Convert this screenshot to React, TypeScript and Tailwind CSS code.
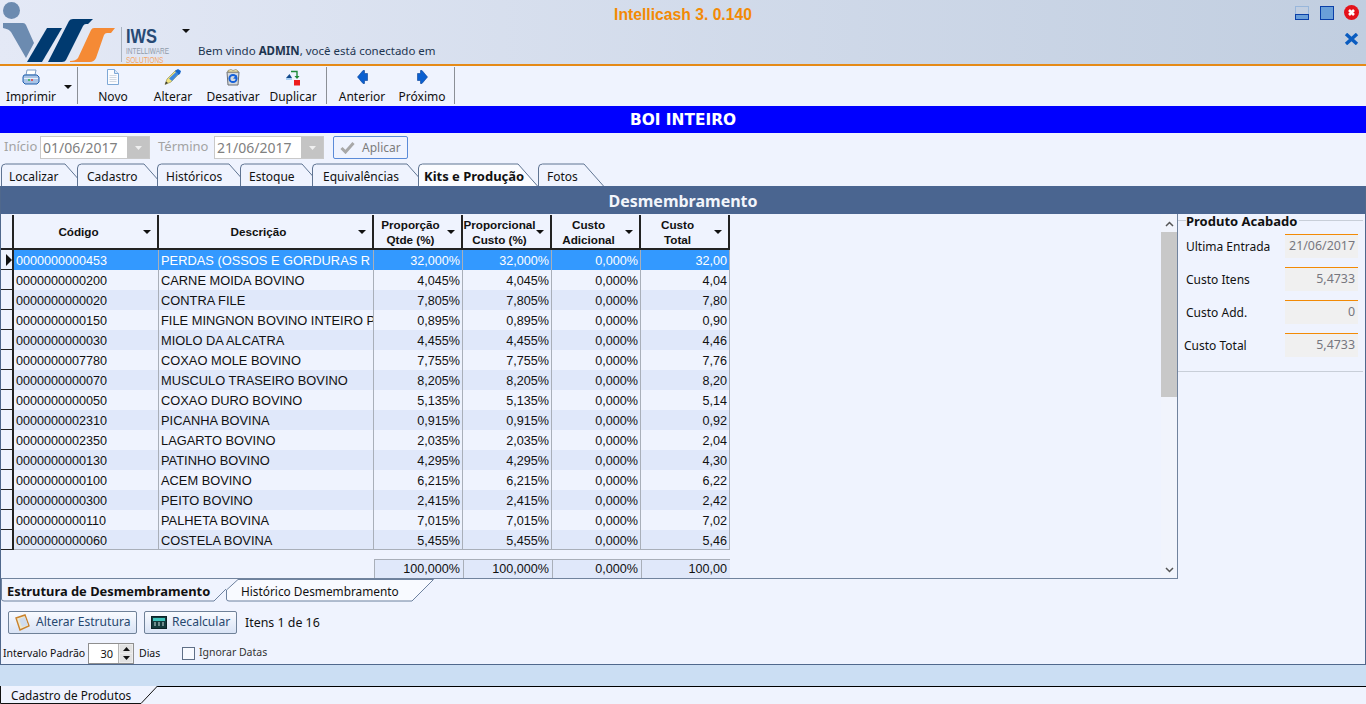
import React from 'react';

const UI = { fontFamily: '"Noto Sans", Tahoma, sans-serif' };
const ARIAL = { fontFamily: '"Liberation Sans", Arial, sans-serif' };

const ROWS = [
  ['0000000000453', 'PERDAS (OSSOS E GORDURAS R', '32,000%', '32,000%', '0,000%', '32,00'],
  ['0000000000200', 'CARNE MOIDA BOVINO', '4,045%', '4,045%', '0,000%', '4,04'],
  ['0000000000020', 'CONTRA FILE', '7,805%', '7,805%', '0,000%', '7,80'],
  ['0000000000150', 'FILE MINGNON BOVINO INTEIRO P', '0,895%', '0,895%', '0,000%', '0,90'],
  ['0000000000030', 'MIOLO DA ALCATRA', '4,455%', '4,455%', '0,000%', '4,46'],
  ['0000000007780', 'COXAO MOLE BOVINO', '7,755%', '7,755%', '0,000%', '7,76'],
  ['0000000000070', 'MUSCULO TRASEIRO BOVINO', '8,205%', '8,205%', '0,000%', '8,20'],
  ['0000000000050', 'COXAO DURO BOVINO', '5,135%', '5,135%', '0,000%', '5,14'],
  ['0000000002310', 'PICANHA BOVINA', '0,915%', '0,915%', '0,000%', '0,92'],
  ['0000000002350', 'LAGARTO BOVINO', '2,035%', '2,035%', '0,000%', '2,04'],
  ['0000000000130', 'PATINHO BOVINO', '4,295%', '4,295%', '0,000%', '4,30'],
  ['0000000000100', 'ACEM BOVINO', '6,215%', '6,215%', '0,000%', '6,22'],
  ['0000000000300', 'PEITO BOVINO', '2,415%', '2,415%', '0,000%', '2,42'],
  ['0000000000110', 'PALHETA BOVINA', '7,015%', '7,015%', '0,000%', '7,02'],
  ['0000000000060', 'COSTELA BOVINA', '5,455%', '5,455%', '0,000%', '5,46'],
];

const TABS = [
  { label: 'Localizar', w: 84, cls: 'ml-px pl-[8px]' },
  { label: 'Cadastro', w: 87, cls: '-ml-[8px] pl-[10px]' },
  { label: 'Históricos', w: 92, cls: '-ml-[7px] pl-[9px]' },
  { label: 'Estoque', w: 82, cls: '-ml-[9px] pl-[9px]' },
  { label: 'Equivalências', w: 115, cls: '-ml-[10px] pl-[11px]' },
  { label: 'Kits e Produção', w: 120, cls: '-ml-[9px] pl-[6px] font-bold text-[13px] z-10', active: true },
  { label: 'Fotos', w: 66, cls: 'pl-[9px]' },
];

const SIDE_FIELDS = [
  { label: 'Ultima Entrada', value: '21/06/2017', cls: 'pl-[8px]' },
  { label: 'Custo Itens', value: '5,4733', cls: 'pl-[8px]' },
  { label: 'Custo Add.', value: '0', cls: 'pl-[8px]' },
  { label: 'Custo Total', value: '5,4733', cls: 'pl-[6px]' },
];

const Caret = () => (
  <svg width="8" height="4" viewBox="0 0 8 4" className="shrink-0">
    <path d="M0 0h8L4 4z" fill="#111" />
  </svg>
);

const Logo = () => (
  <svg width="118" height="64" viewBox="0 0 118 64" className="shrink-0">
    <circle cx="11.5" cy="10.5" r="8.5" fill="#6c8bb0" />
    <path d="M3 23h20q2 0 3 2l8 18-8 15L11 32q-2-3-8-4z" fill="#6c8bb0" />
    <path d="M27 62 47 28h15L42 62z" fill="#003a70" />
    <path d="M48 62 69 21q1-2 4-2H93l-5 5h-2q-2 0-3 2L66 60q-1 2-4 2z" fill="#003a70" />
    <path d="M70 61q6 0 8-3L91 30q1-2 3-2h21l-4 5h-4q-2 0-3 2L96 58q-2 4-6 4H70z" fill="#f58a35" />
  </svg>
);

const PrinterIcon = () => (
  <svg width="18" height="16" viewBox="0 0 18 16">
    <path d="M5 1h9l-1 5H4z" fill="#fff" stroke="#7b9cc4" />
    <path d="M2 6h13l2 2v5l-2 2H3l-2-2V8z" fill="#a9c4e6" stroke="#1f5fae" />
    <path d="M2 9.5h14" stroke="#e7f0fb" />
    <path d="M6 11h2" stroke="#35b04a" strokeWidth="1.4" />
    <path d="M9 11h2" stroke="#e23a3a" strokeWidth="1.4" />
  </svg>
);

const DocIcon = () => (
  <svg width="14" height="16" viewBox="0 0 14 16">
    <path d="M1.5.5h7l4 4v11h-11z" fill="#fbfcff" stroke="#7ea8d6" />
    <path d="M8.5.5v4h4" fill="#dbe7f6" stroke="#7ea8d6" />
    <path d="M3.5 6.5h7M3.5 8.5h7M3.5 10.5h7M3.5 12.5h7" stroke="#d3d9e2" />
  </svg>
);

const PencilIcon = () => (
  <svg width="18" height="16" viewBox="0 0 18 16">
    <path d="M1 15.5 3 10 12 1l4 3-9 9z" fill="#f1e27c" stroke="#8d8a4c" strokeWidth=".6" />
    <path d="M11 2 14 0l3 2-1 3-2 1z" fill="#1565c8" />
    <path d="M5 9.5 12 3l2.5 2L8 12z" fill="#3b87e0" />
    <path d="M1 15.5 2 12.5l2 1.5z" fill="#333" />
  </svg>
);

const RecycleIcon = () => (
  <svg width="16" height="17" viewBox="0 0 16 17">
    <path d="M2 3h12l-1 13H3z" fill="#d5d9de" stroke="#6c6f73" />
    <path d="M3 1.5 6 .5l2 1 3-1 2 1.5v1H3z" fill="#efe6b8" stroke="#7c6f3f" strokeWidth=".6" />
    <circle cx="8" cy="9.5" r="3.6" fill="none" stroke="#1560d8" strokeWidth="2" />
    <path d="M8 9.5 12 6v4z" fill="#1560d8" />
  </svg>
);

const DuplicateIcon = () => (
  <svg width="16" height="17" viewBox="0 0 16 17">
    <path d="M1 9 4.500 5 7 9z" fill="#124a8c" />
    <rect x="1" y="9" width="6" height="2" fill="#a9d0f5" />
    <path d="M6 2.500h6v6" fill="none" stroke="#1f8a3a" strokeWidth="1.400" />
    <path d="M9.500 7h5L12 10z" fill="#1f8a3a" />
    <rect x="9" y="11" width="6" height="5.500" fill="#ee1c1c" />
  </svg>
);

const ArrowIcon = ({ flip }: { flip?: boolean }) => (
  <svg width="11" height="14" viewBox="0 0 11 14" className={flip ? 'scale-x-[-1]' : ''}>
    <path d="M0.500 7 6 .5h1.500v3h3v7h-3v3H6z" fill="#0a5fd0" stroke="#063f96" strokeWidth=".6" />
  </svg>
);

const ToolButton = ({ label, icon }: { label: string; icon: React.ReactNode }) => (
  <div className="flex w-[60px] flex-col items-center">
    <div className="flex h-[22px] items-center">{icon}</div>
    <span className="mt-[1px] text-[12px] leading-[16px] whitespace-nowrap text-[#111]">{label}</span>
  </div>
);

const Sep = () => <div className="mt-[1px] h-[37px] w-px shrink-0 bg-[#8b8f96]" />;

const DateBox = ({ value }: { value: string }) => (
  <div className="flex h-[23px] w-[110px] items-stretch border border-[#c9c9c9] bg-white">
    <span className="flex-1 pl-[2px] text-[14px] leading-[21px] text-[#808080]">{value}</span>
    <span className="flex w-[22px] items-center justify-center bg-[#c4c4c4]">
      <svg width="7" height="4" viewBox="0 0 7 4"><path d="M0 0h7L3.500 4z" fill="#f0f0f0" /></svg>
    </span>
  </div>
);

const Tab = ({ label, w, cls, active }: { label: string; w: number; cls: string; active?: boolean }) => (
  <div className={`relative h-[23px] shrink-0 text-[12px] leading-[27px] text-[#111] ${cls}`} style={{ width: w }}>
    <svg width={w} height="23" className="absolute top-0 left-0">
      <path
        d={`M.5 23V5Q.5 1 4.500 1H${w - 20}L${w - 0.5} 23`}
        fill={active ? '#fbfcff' : '#eff3fe'}
        stroke="#5f7492"
      />
    </svg>
    <span className="relative whitespace-nowrap">{label}</span>
  </div>
);

const HeaderCell = ({ lines }: { lines: string[] }) => (
  <div className="flex items-center border-r-2 border-b-2 border-r-[#222] border-b-[#222] bg-[#eff3fe] pr-[6px]">
    <div className="min-w-0 flex-1 text-center text-[11.7px] leading-[15px] font-bold text-[#111]" style={ARIAL}>
      {lines.map((l) => (
        <div key={l} className="whitespace-nowrap">{l}</div>
      ))}
    </div>
    <Caret />
  </div>
);

const PanelTab = ({ label, active }: { label: string; active?: boolean }) =>
  active ? (
    <div className="relative h-[23px] w-[225px] shrink-0 text-[12.9px] leading-[24px] font-bold text-[#111]">
      <svg width="225" height="23" className="absolute top-0 left-0">
        <path d="M.5 0V20Q.5 22 3 22H213L225 10" fill="none" stroke="#6d819e" />
      </svg>
      <span className="relative pl-[6px]">{label}</span>
    </div>
  ) : (
    <div className="relative h-[23px] w-[208px] shrink-0 text-[11.85px] leading-[24px] text-[#111]">
      <svg width="208" height="23" className="absolute top-0 left-0">
        <path d="M.5 20V11L12 .5H207.500L186 22H3Q.5 22 .5 20z" fill="#f8faff" stroke="#6d819e" />
      </svg>
      <span className="relative pl-[15px]">{label}</span>
    </div>
  );

const ClipIcon = () => (
  <svg width="15" height="17" viewBox="0 0 15 17">
    <path d="M1 4 10 1l4 11-9 4z" fill="#eee9cf" stroke="#c9822c" strokeWidth="1.400" />
    <path d="M4 5l6-2 3 8-6 2z" fill="#cfdcee" />
  </svg>
);

const CalcIcon = () => (
  <svg width="16" height="13" viewBox="0 0 16 13">
    <rect x=".5" y=".5" width="15" height="12" fill="#143a3c" stroke="#0c2226" />
    <rect x="2" y="2" width="12" height="3" fill="#3fc4bc" />
    <path d="M3 7h2M7 7h2M11 7h2M3 9h2M7 9h2M11 9h2" stroke="#c9dcdc" />
  </svg>
);

const ActionButton = ({ icon, label, cls }: { icon: React.ReactNode; label: string; cls: string }) => (
  <div className={`flex h-[23px] items-center rounded-[2px] border border-[#6f8198] bg-gradient-to-b from-[#f9fbff] to-[#d9e3f5] text-[12.1px] text-[#27486f] ${cls}`}>
    {icon}
    <span className="whitespace-nowrap">{label}</span>
  </div>
);

export default function App() {
  return (
    <div className="flex h-[704px] w-[1366px] flex-col overflow-hidden bg-[#eff3fe]" style={UI}>
      {/* title bar */}
      <header className="grid h-[66px] shrink-0 grid-cols-[1fr_auto_1fr] border-b-2 border-[#e58a17] bg-gradient-to-r from-[#e4e9f6] to-[#c1cee0]">
        <div className="flex">
          <Logo />
          <div className="ml-[3px] mt-[27px] h-[35px] w-px bg-[#a9b3bf]" />
          <div className="ml-[4px] flex w-[50px] flex-col pt-[26px]">
            <span className="origin-left scale-x-[.82] text-[20px] leading-[20px] font-bold text-[#274a75]" style={ARIAL}>IWS</span>
            <span className="mt-[1px] origin-left scale-x-[.72] text-[9px] leading-[9px] whitespace-nowrap text-[#8f9baa]" style={ARIAL}>INTELLIWARE</span>
            <span className="origin-left scale-x-[.72] text-[9px] leading-[9px] whitespace-nowrap text-[#f3a666]" style={ARIAL}>SOLUTIONS</span>
          </div>
          <div className="ml-[1px] flex flex-col">
            <div className="mt-[29px] ml-[5px]"><Caret /></div>
            <div className="mt-[10px] ml-[21px] text-[11.5px] leading-[16px] whitespace-nowrap text-[#1d3550]">
              Bem vindo <b>ADMIN</b>, você está conectado em
            </div>
          </div>
        </div>
        <div className="pt-[5px] text-[15.7px] leading-[19px] font-bold text-[#f28a05]" style={ARIAL}>Intellicash 3. 0.140</div>
        <div className="flex flex-col items-end pt-[5px] pr-[7px]">
          <div className="flex items-center">
            <svg width="14" height="14" viewBox="0 0 14 14">
              <rect x=".5" y=".5" width="13" height="8" fill="none" stroke="#6f9fd4" strokeDasharray="1 1" />
              <rect x=".5" y="8.500" width="13" height="5" fill="#6a9fd8" stroke="#0a3fa8" />
            </svg>
            <svg width="14" height="14" viewBox="0 0 14 14" className="mr-[10px] ml-[11px]">
              <rect x=".5" y=".5" width="13" height="13" fill="#6a9fd8" stroke="#0a3fa8" />
            </svg>
            <svg width="15" height="15" viewBox="0 0 15 15">
              <circle cx="7.500" cy="7.500" r="7.500" fill="#e4121b" />
              <path d="M5 5l5 5M10 5l-5 5" stroke="#fff" strokeWidth="2.600" />
            </svg>
          </div>
          <svg width="15" height="12" viewBox="0 0 15 12" className="mt-[13px]">
            <path d="M2 1l11 10M13 1 2 11" stroke="#0a5cc0" strokeWidth="3.400" />
          </svg>
        </div>
      </header>

      {/* toolbar */}
      <div className="flex h-[40px] shrink-0 bg-[#eff3fe]">
        <div className="flex w-[77px] shrink-0 pl-[1px]">
          <ToolButton label="Imprimir" icon={<PrinterIcon />} />
          <div className="mt-[19px] ml-[3px]"><Caret /></div>
        </div>
        <Sep />
        <div className="flex w-[248px] shrink-0 pl-[5px]">
          <ToolButton label="Novo" icon={<DocIcon />} />
          <ToolButton label="Alterar" icon={<PencilIcon />} />
          <ToolButton label="Desativar" icon={<RecycleIcon />} />
          <ToolButton label="Duplicar" icon={<DuplicateIcon />} />
        </div>
        <Sep />
        <div className="flex w-[127px] shrink-0 pl-[5px]">
          <ToolButton label="Anterior" icon={<ArrowIcon />} />
          <ToolButton label="Próximo" icon={<ArrowIcon flip />} />
        </div>
        <Sep />
      </div>

      {/* record title */}
      <div className="h-[27px] shrink-0 bg-[#0000ff] text-center text-[15.4px] leading-[29px] font-bold text-white" style={{ fontFamily: '"DejaVu Sans", sans-serif' }}>
        BOI INTEIRO
      </div>

      {/* date filter */}
      <div className="flex h-[30px] shrink-0 items-start pt-[3px] text-[#a3a3a3]">
        <span className="w-[40px] shrink-0 pl-[4px] text-[13px] leading-[20px]">Início</span>
        <DateBox value="01/06/2017" />
        <span className="w-[64px] shrink-0 pl-[8px] text-[13px] leading-[20px]">Término</span>
        <DateBox value="21/06/2017" />
        <div className="ml-[9px] flex h-[23px] w-[75px] items-center gap-[7px] rounded-[2px] border border-[#5b8bd8] pl-[6px] text-[12px] text-[#7c7c7c]">
          <svg width="15" height="13" viewBox="0 0 15 13"><path d="M1.500 7 5.500 11 13.500 2" fill="none" stroke="#a8a8a8" strokeWidth="3" /></svg>
          Aplicar
        </div>
      </div>

      {/* main tabs */}
      <div className="flex h-[23px] shrink-0">
        {TABS.map((t) => (
          <Tab key={t.label} {...t} />
        ))}
      </div>

      {/* panel */}
      <section className="flex h-[479px] shrink-0 flex-col border-x border-b border-[#50688c]">
        <div className="h-[28px] shrink-0 bg-[#4a6590] pt-px text-center text-[16px] leading-[29px] font-bold text-[#f2f5fb]">
          Desmembramento
        </div>

        <div className="flex h-[365px] shrink-0">
          <div className="flex w-[1177px] shrink-0 border-r border-b border-[#71839d]">
            {/* grid */}
            <div className="w-[1160px] shrink-0" style={ARIAL}>
              <div className="grid h-[36px] w-[730px] grid-cols-[13px_145px_215px_89px_89px_89px_89px] pt-px">
                <div className="border-r-2 border-b-2 border-r-[#222] border-b-[#222]" />
                <HeaderCell lines={['Código']} />
                <HeaderCell lines={['Descrição']} />
                <HeaderCell lines={['Proporção', 'Qtde (%)']} />
                <HeaderCell lines={['Proporcional', 'Custo (%)']} />
                <HeaderCell lines={['Custo', 'Adicional']} />
                <HeaderCell lines={['Custo', 'Total']} />
              </div>
              {ROWS.map((r, i) => {
                const sel = i === 0;
                const bg = sel ? 'bg-[#3399ff] text-white' : i % 2 === 1 ? 'bg-[#eff3fe] text-[#111]' : 'bg-[#e0e8fa] text-[#111]';
                const edge = i === ROWS.length - 1 ? 'border-r border-b border-[#a9afb9]' : 'border-r border-[#a9afb9]';
                return (
                  <div key={r[0]} className="grid h-[20px] w-[730px] grid-cols-[13px_145px_215px_89px_89px_89px_89px] text-[12.6px] leading-[22px]">
                    <div className="flex items-center border-r-2 border-b border-[#222] pl-[5px]">
                      {sel && (
                        <svg width="6" height="12" viewBox="0 0 6 12"><path d="M0 0l6 6-6 6z" fill="#111" /></svg>
                      )}
                    </div>
                    <div className={`overflow-hidden pl-[2px] ${edge} ${bg}`}>{r[0]}</div>
                    <div className={`overflow-hidden pl-[2px] text-[12.85px] whitespace-nowrap ${edge} ${bg}`}>{r[1]}</div>
                    {r.slice(2).map((v, j) => (
                      <div key={j} className={`overflow-hidden pr-[2px] text-right ${edge} ${bg}`}>{v}</div>
                    ))}
                  </div>
                );
              })}
              <div className="mt-[9px] grid h-[18px] w-[730px] grid-cols-[373px_89px_89px_89px_89px] text-[12.6px] leading-[18px] text-[#111]">
                <div />
                {['100,000%', '100,000%', '0,000%', '100,00'].map((v, j) => (
                  <div key={j} className="border-t border-l border-[#a9afb9] bg-[#e0e8fa] pr-[3px] text-right">{v}</div>
                ))}
              </div>
            </div>
            {/* scrollbar */}
            <div className="flex w-[16px] shrink-0 flex-col items-center bg-[#f1f4fc]">
              <div className="flex h-[18px] items-center pt-[2px]">
                <svg width="9" height="6" viewBox="0 0 9 6"><path d="M1 5l3.500-3.500L8 5" fill="none" stroke="#555" strokeWidth="1.500" /></svg>
              </div>
              <div className="h-[165px] w-full bg-[#c8c8c8]" />
              <div className="flex-1" />
              <div className="flex h-[17px] items-center">
                <svg width="9" height="6" viewBox="0 0 9 6"><path d="M1 1l3.500 3.500L8 1" fill="none" stroke="#555" strokeWidth="1.500" /></svg>
              </div>
            </div>
          </div>

          {/* produto acabado */}
          <aside className="w-[185px] shrink-0">
            <div className="h-[158px] border-b border-[#c8ced8]">
              <div className="relative h-[14px]">
                <div className="absolute top-[6px] right-0 left-0 h-px bg-[#c8ced8]" />
                <div className="relative ml-[8px] w-fit bg-[#eff3fe] pr-[2px] text-[13px] leading-[14px] font-bold text-[#111]">Produto Acabado</div>
              </div>
              <div className="mt-[6px] flex flex-col gap-[9px]">
                {SIDE_FIELDS.map((f) => (
                  <div key={f.label} className={`flex h-[24px] items-center ${f.cls}`}>
                    <span className="flex-1 pt-[2px] text-[12px] whitespace-nowrap text-[#111]">{f.label}</span>
                    <span className="mr-[5px] h-[24px] w-[73px] border-t border-[#f28a05] bg-[#f0f0f0] pr-[3px] text-right text-[12.4px] leading-[22px] text-[#77777f]">{f.value}</span>
                  </div>
                ))}
              </div>
            </div>
          </aside>
        </div>

        {/* lower tabs */}
        <div className="flex h-[23px] shrink-0">
          <PanelTab label="Estrutura de Desmembramento" active />
          <PanelTab label="Histórico Desmembramento" />
        </div>

        <div className="mt-[9px] flex h-[23px] shrink-0 items-center pl-[7px]">
          <ActionButton cls="w-[129px] gap-[6px] pl-[6px]" icon={<ClipIcon />} label="Alterar Estrutura" />
          <ActionButton cls="ml-[7px] w-[93px] gap-[5px] pl-[6px]" icon={<CalcIcon />} label="Recalcular" />
          <span className="ml-[8px] pt-[2px] text-[12.4px] text-[#111]">Itens 1 de 16</span>
        </div>

        <div className="mt-[9px] flex h-[21px] shrink-0 items-center pl-[2px] text-[10.5px] text-[#111]">
          <span className="w-[85px] shrink-0 whitespace-nowrap">Intervalo Padrão</span>
          <div className="flex h-[21px] w-[46px] shrink-0 items-stretch border border-[#8f8f8f] bg-white">
            <span className="flex-1 pr-[5px] text-right text-[11px] leading-[19px]">30</span>
            <span className="flex w-[15px] flex-col gap-px border-l border-[#b5b5b5] bg-[#ededed] p-px">
              <span className="flex flex-1 items-center justify-center bg-[#e2e2e2]"><svg width="7" height="4" viewBox="0 0 7 4"><path d="M0 4h7L3.500 0z" fill="#111" /></svg></span>
              <span className="flex flex-1 items-center justify-center bg-[#e2e2e2]"><svg width="7" height="4" viewBox="0 0 7 4"><path d="M0 0h7L3.500 4z" fill="#111" /></svg></span>
            </span>
          </div>
          <span className="ml-[5px] w-[43px] shrink-0">Dias</span>
          <span className="h-[13px] w-[13px] shrink-0 border border-[#5f6f86] bg-[#f8faff]" />
          <span className="ml-[4px] -mt-[2px] whitespace-nowrap text-[#333]">Ignorar Datas</span>
        </div>
      </section>

      {/* window strip */}
      <div className="h-[21px] shrink-0 bg-[#cbdef3]" />

      {/* open windows */}
      <footer className="relative h-[18px] shrink-0 border-t border-black">
        <div className="relative w-[158px] text-[11.8px] leading-[16px] text-[#111]">
          <svg width="158" height="18" className="absolute -top-px left-0">
            <path d="M.5 0V17.500H141L157.500 0" fill="#eff3fe" stroke="#111" />
          </svg>
          <span className="relative pl-[11px] whitespace-nowrap">Cadastro de Produtos</span>
        </div>
      </footer>
    </div>
  );
}
